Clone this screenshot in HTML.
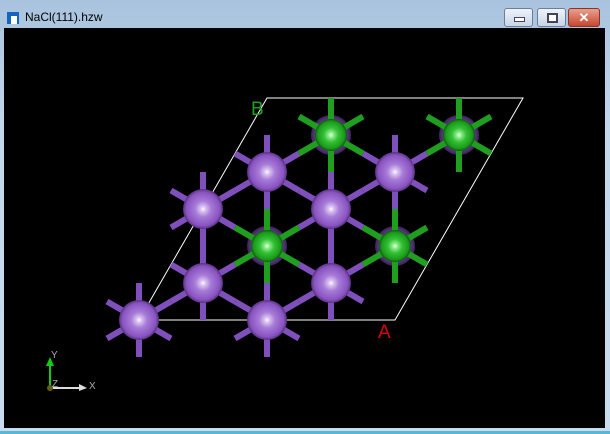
<!DOCTYPE html>
<html><head><style>
html,body{margin:0;padding:0;width:610px;height:434px;overflow:hidden;font-family:"Liberation Sans",sans-serif}
.win{position:absolute;left:0;top:0;width:610px;height:434px;background:linear-gradient(#a9c3de,#c3d7ec 30%,#c9dcef);}
.title{position:absolute;left:25px;top:10px;font-size:12px;color:#000}
.icon{position:absolute;left:7px;top:12px;width:12px;height:12px;background:#1565c0}
.icon:after{content:"";position:absolute;left:4px;top:4px;width:6px;height:8px;background:#fff}
.btn{position:absolute;top:8px;height:17px;border:1px solid #6d7f96;border-radius:3px;background:linear-gradient(#eef3fa,#c8d5e6)}
.view{position:absolute;left:4px;top:28px;width:601px;height:400px;background:#000}
.bot{position:absolute;left:0;top:431px;width:610px;height:3px;background:#58b6d6}
</style></head><body>
<div class="win">
<div class="icon"></div>
<div class="title">NaCl(111).hzw</div>
<div class="btn" style="left:504px;width:27px"><div style="position:absolute;left:9px;top:8px;width:9px;height:3px;background:#fff;border:1px solid #445"></div></div>
<div class="btn" style="left:537px;width:27px"><div style="position:absolute;left:9px;top:4px;width:7px;height:6px;border:2px solid #445;background:#fff"></div></div>
<div class="btn" style="left:568px;width:30px;background:linear-gradient(#e9a08e,#c7472f);border-color:#8a3326;color:#fff;font-weight:bold;font-size:13px;text-align:center;line-height:17px">✕</div>
<div class="view"></div>
<div class="bot"></div>
</div>
<svg width="610" height="434" style="position:absolute;left:0;top:0">
<defs>
<radialGradient id="p" cx="0.5" cy="0.5" r="0.5"><stop offset="0" stop-color="#fff"/><stop offset="0.12" stop-color="#dcc6f2"/><stop offset="0.4" stop-color="#a77bd8"/><stop offset="0.85" stop-color="#8852c0"/><stop offset="1" stop-color="#56307c"/></radialGradient>
<radialGradient id="h" cx="0.5" cy="0.5" r="0.5"><stop offset="0.7" stop-color="#6a4394"/><stop offset="1" stop-color="#3a2258"/></radialGradient>
<radialGradient id="g" cx="0.5" cy="0.5" r="0.5"><stop offset="0" stop-color="#fff"/><stop offset="0.15" stop-color="#8ef08e"/><stop offset="0.45" stop-color="#35c035"/><stop offset="0.85" stop-color="#1a9a1a"/><stop offset="1" stop-color="#0c5a0c"/></radialGradient>
<g id="bp" stroke="#7f4fbb" stroke-width="6"><path d="M0 0V-37M0 0V37M0 0L32 -18.5M0 0L32 18.5M0 0L-32 -18.5M0 0L-32 18.5"/></g>
<g id="bg" stroke="#1f9e1f" stroke-width="6"><path d="M0 0V-37M0 0V37M0 0L32 -18.5M0 0L32 18.5M0 0L-32 -18.5M0 0L-32 18.5"/></g>
</defs>
<g stroke="#fff" stroke-width="1" fill="none"><path d="M267 98H523L395 320H139Z"/></g>
<use href="#bp" x="267" y="172"/><use href="#bp" x="395" y="172"/><use href="#bp" x="203" y="209"/><use href="#bp" x="331" y="209"/><use href="#bp" x="203" y="283"/><use href="#bp" x="331" y="283"/><use href="#bp" x="139" y="320"/><use href="#bp" x="267" y="320"/>
<g fill="url(#h)"><circle cx="331" cy="135" r="20"/><circle cx="459" cy="135" r="20"/><circle cx="267" cy="246" r="20"/><circle cx="395" cy="246" r="20"/></g>
<use href="#bg" x="331" y="135"/><use href="#bg" x="459" y="135"/><use href="#bg" x="267" y="246"/><use href="#bg" x="395" y="246"/>
<g fill="url(#p)"><circle cx="267" cy="172" r="20"/><circle cx="395" cy="172" r="20"/><circle cx="203" cy="209" r="20"/><circle cx="331" cy="209" r="20"/><circle cx="203" cy="283" r="20"/><circle cx="331" cy="283" r="20"/><circle cx="139" cy="320" r="20"/><circle cx="267" cy="320" r="20"/></g>
<g fill="url(#g)"><circle cx="331" cy="135" r="16"/><circle cx="459" cy="135" r="16"/><circle cx="267" cy="246" r="16"/><circle cx="395" cy="246" r="16"/></g>
<text x="251" y="115" fill="#1fa01f" font-size="19" font-family="Liberation Sans">B</text>
<text x="378" y="338" fill="#d00" font-size="19" font-family="Liberation Sans">A</text>
<line x1="50" y1="388" x2="80" y2="388" stroke="#ddd" stroke-width="2"/><path d="M79 384L87 388L79 391Z" fill="#ddd"/>
<line x1="50" y1="388" x2="50" y2="365" stroke="#1c1" stroke-width="2"/><path d="M46 366L50 357L54 366Z" fill="#1c1"/>
<circle cx="50" cy="388" r="3" fill="#6b5a1a"/>
<g fill="#aaa" font-size="10" font-family="Liberation Sans"><text x="51" y="358">Y</text><text x="89" y="389">X</text><text x="52" y="387">Z</text></g>
</svg>
</body></html>
